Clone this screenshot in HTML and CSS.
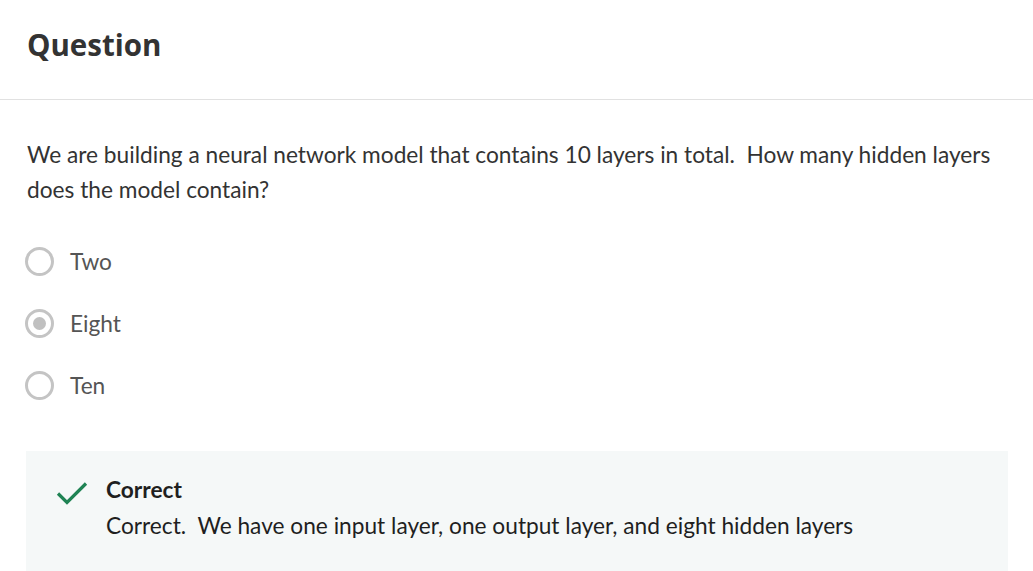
FILE: index.html
```html
<!DOCTYPE html>
<html lang="en">
<head>
<meta charset="utf-8">
<link rel="stylesheet" href="styles.css">
</head>
<body>
<div class="page">
  <header class="header">
    <h2 class="title">Question</h2>
  </header>
  <main class="content">
    <p class="prompt">We are building a neural network model that contains 10 layers in total.&nbsp; How many hidden layers does the model contain?</p>
    <div class="options">
      <div class="option"><span class="radio"></span><span class="label">Two</span></div>
      <div class="option"><span class="radio checked"></span><span class="label">Eight</span></div>
      <div class="option"><span class="radio"></span><span class="label">Ten</span></div>
    </div>
    <div class="feedback">
      <svg class="check" width="32" height="26" viewBox="0 0 32 26"><path d="M2 12.5 L11 21.5 L30 2.5" fill="none" stroke="#1f8354" stroke-width="3.2"/></svg>
      <div class="fb-text">
        <div class="fb-title">Correct</div>
        <div class="fb-body">Correct.&nbsp; We have one input layer, one output layer, and eight hidden layers</div>
      </div>
    </div>
  </main>
</div>
</body>
</html>
```
FILE: styles.css
```css
* { box-sizing: border-box; }
html, body { margin: 0; padding: 0; background: #fff; }
body { font-family: "Lato", "Noto Sans", sans-serif; color: #1f1f1f; overflow: hidden; }
.header {
  height: 100px;
  border-bottom: 1px solid #e1e1e1;
  padding: 25px 27px 0;
}
.title {
  margin: 0;
  font-family: "Open Sans", sans-serif;
  font-weight: 700;
  font-size: 29.5px;
  line-height: 40px;
  color: #333;
}
.content { padding: 37px 26px 0 26px; }
.prompt {
  margin: 0 0 0 1px;
  font-size: 22.7px;
  line-height: 35px;
  color: #333;
}
.options { display: flex; flex-direction: column; gap: 31px; margin-top: 39px; }
.option { display: flex; align-items: center; height: 31px; }
.radio {
  width: 29px; height: 29px;
  border: 3px solid #c4c4c4;
  border-radius: 50%;
  display: flex; align-items: center; justify-content: center;
  margin-left: -1px;
}
.radio.checked::after {
  content: "";
  width: 13px; height: 13px;
  border-radius: 50%;
  background: #c0c0c0;
}
.label { margin-left: 16px; font-size: 22.7px; color: #555; }
.feedback {
  margin-top: 50px;
  width: 982px;
  background: #f5f8f8;
  display: flex;
  padding: 25px 0 40px 30px;
  gap: 18px;
}
.check { flex: none; margin-top: 5px; }
.fb-title { font-weight: 700; font-size: 22.7px; line-height: 28px; color: #1f1f1f; }
.fb-body { font-size: 22.7px; line-height: 28px; margin-top: 8px; color: #1f1f1f; }
```
